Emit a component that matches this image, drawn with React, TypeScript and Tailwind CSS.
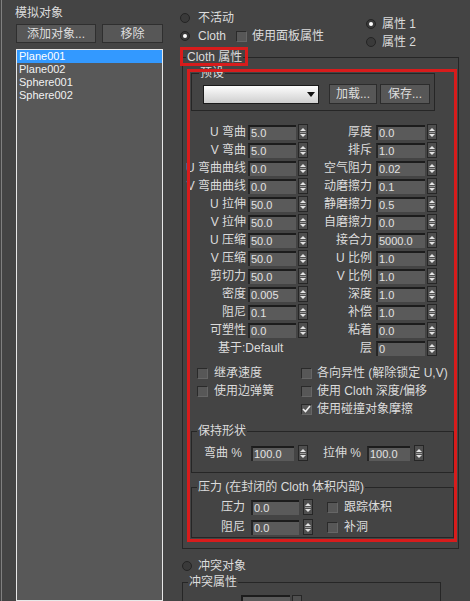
import React from 'react';

const Radio = ({ on }: { on?: boolean }) => (
  <span className="w-[10px] h-[10px] rounded-full bg-[#3a3a3a] border border-[#242424] flex items-center justify-center shrink-0">
    {on && <span className="w-[4px] h-[4px] rounded-full bg-white" />}
  </span>
);

const Check = ({ on }: { on?: boolean }) => (
  <span className="w-[11px] h-[11px] bg-[#575757] border border-t-[#2a2a2a] border-l-[#2a2a2a] border-r-[#666666] border-b-[#666666] flex items-center justify-center shrink-0">
    {on && (
      <svg width="9" height="8" viewBox="0 0 9 8">
        <path d="M1 4L3.5 6.5L8 1" stroke="#f0f0f0" strokeWidth="1.6" fill="none" />
      </svg>
    )}
  </span>
);

const Spin = ({ className = '' }: { className?: string }) => (
  <span className={`w-[10px] h-[16px] bg-[#4f4f4f] border border-[#262626] flex flex-col items-center justify-center gap-[1px] shrink-0 ${className}`}>
    <svg width="6" height="3" viewBox="0 0 6 3"><path d="M0 3L3 0L6 3Z" fill="#e4e4e4" /></svg>
    <span className="w-[6px] h-[1px] bg-[#9a9a9a]" />
    <svg width="6" height="3" viewBox="0 0 6 3"><path d="M0 0L6 0L3 3Z" fill="#e4e4e4" /></svg>
  </span>
);

const Field = ({ v, className }: { v: string; className: string }) => (
  <span className={`h-[15px] bg-[#5a5a5a] border-t-2 border-l-2 border-t-[#1c1c1c] border-l-[#262626] text-[11px] leading-[13px] pl-[1px] text-[#e2e2e2] shrink-0 ${className}`}>
    {v}
  </span>
);

const Label = ({ text, className }: { text: string; className: string }) => (
  <div className={`flex justify-end shrink-0 ${className}`}>
    <span className="whitespace-nowrap shrink-0">{text}</span>
  </div>
);

const rows = [
  ['U 弯曲', '5.0', '厚度', '0.0'],
  ['V 弯曲', '5.0', '排斥', '1.0'],
  ['U 弯曲曲线', '0.0', '空气阻力', '0.02'],
  ['V 弯曲曲线', '0.0', '动磨擦力', '0.1'],
  ['U 拉伸', '50.0', '静磨擦力', '0.5'],
  ['V 拉伸', '50.0', '自磨擦力', '0.0'],
  ['U 压缩', '50.0', '接合力', '5000.0'],
  ['V 压缩', '50.0', 'U 比例', '1.0'],
  ['剪切力', '50.0', 'V 比例', '1.0'],
  ['密度', '0.005', '深度', '1.0'],
  ['阻尼', '0.1', '补偿', '1.0'],
  ['可塑性', '0.0', '粘着', '0.0'],
];

const objects = ['Plane001', 'Plane002', 'Sphere001', 'Sphere002'];

export default function App() {
  return (
    <div className="relative w-[470px] h-[601px] overflow-hidden bg-[#444444] text-[#dcdcdc] text-[12px] leading-[14px] flex font-['Liberation_Sans','Noto_Sans_CJK_SC',sans-serif]">
      {/* Left: simulated objects */}
      <div className="w-[171px] ml-[1px] shrink-0 border-l border-[#808080] pl-[14px] flex flex-col">
        <div className="pt-[6px] -ml-[1px]">模拟对象</div>
        <div className="flex mt-[4px]">
          <button className="w-[80px] h-[19px] bg-[#575757] border border-[#2f2f2f] text-[#dedede] text-[12px]">添加对象...</button>
          <button className="w-[61px] h-[19px] ml-[6px] bg-[#575757] border border-[#2f2f2f] text-[#dedede] text-[12px]">移除</button>
        </div>
        <div className="w-[147px] flex-1 mt-[6px] bg-[#585858] border border-[#e8e8e8] flex flex-col text-[11px] leading-[13px] text-[#f2f2f2]">
          {objects.map((o, i) => (
            <div key={o} className={`h-[13px] pl-[2px] ${i === 0 ? 'bg-[#3399ff] text-white' : ''}`}>{o}</div>
          ))}
        </div>
      </div>

      {/* Right: cloth panel */}
      <div className="flex-1 flex flex-col">
        <div className="h-[50px] flex shrink-0">
          <div className="w-[194px] pl-[8px] pt-[11px] flex flex-col gap-[4px]">
            <div className="h-[14px] flex items-center gap-[8px]"><Radio /><span>不活动</span></div>
            <div className="h-[14px] flex items-center">
              <Radio on />
              <span className="ml-[8px] w-[38px]">Cloth</span>
              <Check />
              <span className="ml-[5px]">使用面板属性</span>
            </div>
          </div>
          <div className="pt-[17px] flex flex-col gap-[4px]">
            <div className="h-[14px] flex items-center gap-[6px]"><Radio on /><span>属性 1</span></div>
            <div className="h-[14px] flex items-center gap-[6px]"><Radio /><span>属性 2</span></div>
          </div>
        </div>

        <fieldset className="ml-[10px] w-[277px] border border-[#262626] pb-[10px] shrink-0">
          <legend className="ml-[3px] px-[1px] leading-[14px]">Cloth 属性</legend>

          {/* 预设 */}
          <fieldset className="ml-[8px] mt-[2px] w-[244px] border border-[#262626]">
            <legend className="ml-[7px] px-[1px] leading-[14px]">预设</legend>
            <div className="flex items-center pl-[11px] pt-[4px] pb-[6px]">
              <div className="w-[116px] h-[19px] bg-gradient-to-b from-[#fdfdfd] to-[#cfcfcf] border border-[#1a1a1a] flex items-center justify-end pr-[3px]">
                <svg width="8" height="5" viewBox="0 0 8 5"><path d="M0 0H8L4 5Z" fill="#111" /></svg>
              </div>
              <button className="ml-[10px] w-[48px] h-[20px] bg-[#575757] border border-[#2c2c2c] text-[#dedede] text-[12px]">加载...</button>
              <button className="ml-[3px] w-[50px] h-[20px] bg-[#575757] border border-[#2c2c2c] text-[#dedede] text-[12px]">保存...</button>
            </div>
          </fieldset>

          {/* spinner grid */}
          <div className="mt-[12px] flex flex-col">
            {rows.map(([l, lv, r, rv]) => (
              <div key={l} className="h-[18px] flex items-center">
                <Label text={l} className="w-[63px]" />
                <Field v={lv} className="ml-[2px] w-[48px]" />
                <Spin className="ml-[2px]" />
                <Label text={r} className="w-[64px]" />
                <Field v={rv} className="ml-[4px] w-[49px]" />
                <Spin className="ml-[2px]" />
              </div>
            ))}
            <div className="h-[18px] flex items-center">
              <div className="w-[125px] pl-[35px] shrink-0 whitespace-nowrap">基于:Default</div>
              <Label text="层" className="w-[64px]" />
              <Field v="0" className="ml-[4px] w-[49px]" />
              <Spin className="ml-[2px]" />
            </div>
          </div>

          {/* checkboxes */}
          <div className="mt-[7px] grid grid-cols-[118px_1fr]">
            <div className="h-[18px] pl-[14px] flex items-center gap-[6px]"><Check /><span>继承速度</span></div>
            <div className="h-[18px] flex items-center gap-[5px] whitespace-nowrap"><Check /><span>各向异性 (解除锁定 U,V)</span></div>
            <div className="h-[18px] pl-[14px] flex items-center gap-[6px]"><Check /><span>使用边弹簧</span></div>
            <div className="h-[18px] flex items-center gap-[5px] whitespace-nowrap"><Check /><span>使用 Cloth 深度/偏移</span></div>
            <div />
            <div className="h-[18px] flex items-center gap-[5px] whitespace-nowrap"><Check on /><span>使用碰撞对象摩擦</span></div>
          </div>

          {/* 保持形状 */}
          <fieldset className="ml-[8px] mt-[6px] w-[263px] border border-[#262626] pb-[10px]">
            <legend className="ml-[5px] px-[1px] leading-[14px]">保持形状</legend>
            <div className="mt-[6px] h-[18px] flex items-center pl-[12px]">
              <span className="w-[47px] shrink-0 whitespace-nowrap">弯曲 %</span>
              <Field v="100.0" className="w-[43px]" />
              <Spin className="ml-[4px]" />
              <span className="ml-[15px] w-[44px] shrink-0 whitespace-nowrap">拉伸 %</span>
              <Field v="100.0" className="w-[43px]" />
              <Spin className="ml-[4px]" />
            </div>
          </fieldset>

          {/* 压力 */}
          <fieldset className="ml-[8px] mt-[7px] w-[263px] border border-[#262626] pb-[2px]">
            <legend className="ml-[5px] px-[1px] leading-[14px] whitespace-nowrap">压力 (在封闭的 Cloth 体积内部)</legend>
            <div className="pt-[5px] flex flex-col gap-[4px]">
              {[['压力', '跟踪体积'], ['阻尼', '补洞']].map(([l, c]) => (
                <div key={l} className="h-[16px] flex items-center">
                  <Label text={l} className="w-[53px]" />
                  <Field v="0.0" className="ml-[6px] w-[48px]" />
                  <Spin className="ml-[4px]" />
                  <span className="ml-[14px]"><Check /></span>
                  <span className="ml-[6px]">{c}</span>
                </div>
              ))}
            </div>
          </fieldset>
        </fieldset>

        <div className="mt-[10px] ml-[10px] h-[14px] flex items-center gap-[6px] shrink-0"><Radio /><span>冲突对象</span></div>

        <fieldset className="ml-[10px] mt-[2px] w-[259px] border border-[#262626] shrink-0">
          <legend className="ml-[5px] px-[1px] leading-[14px]">冲突属性</legend>
          <div className="ml-[58px] mt-[6px] flex">
            <div className="w-[49px] h-[12px] border-t-2 border-l-2 border-[#1c1c1c] bg-[#5a5a5a]" />
            <div className="ml-[2px] w-[10px] h-[12px] border border-[#262626] bg-[#4f4f4f]" />
          </div>
        </fieldset>
      </div>

      {/* red annotation frames */}
      <div className="absolute left-[180px] top-[47px] w-[68px] h-[19px] border-[3px] border-[#d81c1c] pointer-events-none" />
      <div className="absolute left-[187px] top-[69px] w-[270px] h-[473px] border-[3px] border-[#d81c1c] pointer-events-none" />
    </div>
  );
}
